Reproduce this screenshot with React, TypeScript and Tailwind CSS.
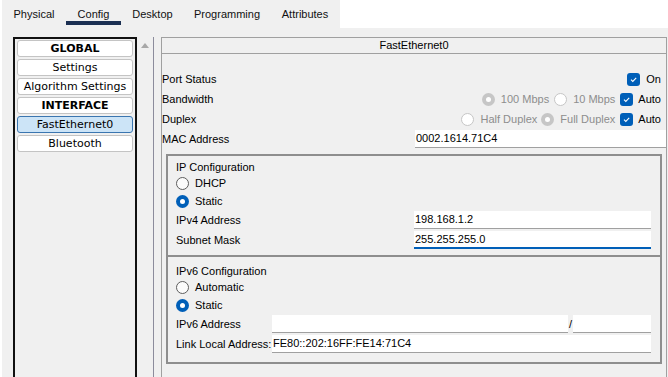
import React from "react";

function Check() {
  return (
    <span className="w-[13px] h-[13px] rounded-[3px] bg-[#005fb8] flex items-center justify-center shrink-0">
      <svg width="9" height="9" viewBox="0 0 9 9">
        <path d="M2 4.7 L3.8 6.4 L7.2 2.9" fill="none" stroke="white" strokeWidth="1.1" />
      </svg>
    </span>
  );
}

function Radio({ on, disabled }: { on?: boolean; disabled?: boolean }) {
  if (on) {
    return (
      <span
        className={
          disabled
            ? "w-[13px] h-[13px] rounded-full bg-[#c6c6c6] flex items-center justify-center shrink-0"
            : "w-[13px] h-[13px] rounded-full bg-[#005fb8] flex items-center justify-center shrink-0"
        }
      >
        <span className="block w-[5px] h-[5px] rounded-full bg-white" />
      </span>
    );
  }
  return (
    <span
      className={
        disabled
          ? "block w-[13px] h-[13px] rounded-full bg-white border border-[#c6c6c6] shrink-0"
          : "block w-[13px] h-[13px] rounded-full bg-[#fbfbfb] border border-[#5d5d5d] shrink-0"
      }
    />
  );
}

function Input({ value, w, active }: { value?: string; w: string; active?: boolean }) {
  return (
    <div
      className={
        (active
          ? "border-b-2 border-[#005fb8] "
          : "border-b border-[#a0a0a0] ") +
        "h-[18px] bg-white flex items-center pl-[1px] text-[11px] text-black " +
        w
      }
    >
      {value}
    </div>
  );
}

const tabs = [
  { t: "Physical", w: "w-[64px]" },
  { t: "Config", w: "w-[55px]", active: true },
  { t: "Desktop", w: "w-[63px]" },
  { t: "Programming", w: "w-[86px]" },
  { t: "Attributes", w: "w-[70px]" },
];

const items = [
  { t: "GLOBAL", bold: true },
  { t: "Settings" },
  { t: "Algorithm Settings" },
  { t: "INTERFACE", bold: true },
  { t: "FastEthernet0", sel: true },
  { t: "Bluetooth" },
];

export default function App() {
  return (
    <div className="w-[668px] h-[377px] bg-white overflow-hidden flex flex-col font-['Liberation_Sans',Arial,sans-serif] text-[11px] text-[#111]">
      {/* tabs */}
      <div className="h-[28px] ml-[2px] w-[338px] bg-[#f0f0f0] flex shrink-0">
        {tabs.map((t) => (
          <div key={t.t} className={"flex flex-col pt-[8px] " + t.w}>
            <div className="h-[13px] leading-[13px] text-center">{t.t}</div>
            {t.active ? <div className="h-[4px] bg-[#1b2f52]" /> : null}
          </div>
        ))}
      </div>

      {/* body */}
      <div className="flex-1 ml-[2px] bg-[#f0f0f0] flex pt-[9px] min-h-0">
        {/* left list */}
        <div className="ml-[11px] w-[124px] h-[400px] border-2 border-[#111] flex flex-col gap-[2px] pt-[1px] px-[2px] font-['DejaVu_Sans',Verdana,sans-serif] text-[11px]">
          {items.map((i) => (
            <div
              key={i.t}
              className={
                (i.sel
                  ? "bg-[#cce4f7] border-[#3b76b0] "
                  : "bg-white border-[#c4c4c4] ") +
                (i.bold ? "font-bold " : "") +
                "h-[17px] border rounded-[3px] flex items-center justify-center text-black leading-none"
              }
            >
              {i.t}
            </div>
          ))}
        </div>

        {/* scroll column */}
        <div className="w-[17px] h-[400px] border-r border-[#8c8c9c] flex justify-center pt-[6px]">
          <svg width="8" height="5" viewBox="0 0 8 5">
            <path d="M0 5 L4 0 L8 5 Z" fill="#a8a8a8" />
          </svg>
        </div>

        {/* right panel */}
        <div className="ml-[7px] w-[506px] h-[400px] border border-[#a0a0a0] flex flex-col">
          <div className="h-[16px] border-b border-[#a0a0a0] flex items-center justify-center text-black">
            FastEthernet0
          </div>

          <div className="mt-[15px] flex flex-col">
            <div className="h-[20px] flex items-center justify-between pr-[5px]">
              <span className="text-black">Port Status</span>
              <span className="flex items-center gap-[6px]">
                <Check />
                <span className="text-black">On</span>
              </span>
            </div>
            <div className="h-[20px] flex items-center justify-between pr-[5px]">
              <span className="text-black">Bandwidth</span>
              <span className="flex items-center">
                <Radio on disabled />
                <span className="ml-[6px] text-[#8d8d8d]">100 Mbps</span>
                <span className="ml-[5px] flex"><Radio disabled /></span>
                <span className="ml-[6px] text-[#8d8d8d]">10 Mbps</span>
                <span className="ml-[5px] flex"><Check /></span>
                <span className="ml-[5px] text-black">Auto</span>
              </span>
            </div>
            <div className="h-[20px] flex items-center justify-between pr-[5px]">
              <span className="text-black">Duplex</span>
              <span className="flex items-center">
                <Radio disabled />
                <span className="ml-[6px] text-[#8d8d8d]">Half Duplex</span>
                <span className="ml-[4px] flex"><Radio on disabled /></span>
                <span className="ml-[6px] text-[#8d8d8d]">Full Duplex</span>
                <span className="ml-[5px] flex"><Check /></span>
                <span className="ml-[5px] text-black">Auto</span>
              </span>
            </div>
            <div className="h-[20px] flex items-center justify-between">
              <span className="text-black">MAC Address</span>
              <Input value="0002.1614.71C4" w="w-[251px]" />
            </div>
          </div>

          {/* IP configuration */}
          <div className="mt-[5px] ml-[4px] w-[496px] border-2 border-[#8e8e8e] flex flex-col pt-[4px] pl-[8px] pr-[9px] pb-[6px]">
            <div className="h-[14px] flex items-center text-black">IP Configuration</div>
            <div className="h-[18px] flex items-center gap-[6px]">
              <Radio />
              <span className="text-black">DHCP</span>
            </div>
            <div className="h-[18px] flex items-center gap-[6px]">
              <Radio on />
              <span className="text-black">Static</span>
            </div>
            <div className="mt-[1px] h-[18px] flex items-center justify-between">
              <span className="text-black">IPv4 Address</span>
              <Input value="198.168.1.2" w="w-[237px]" />
            </div>
            <div className="mt-[2px] h-[18px] flex items-center justify-between">
              <span className="text-black">Subnet Mask</span>
              <Input value="255.255.255.0" w="w-[237px]" active />
            </div>
          </div>

          {/* IPv6 configuration */}
          <div className="ml-[4px] w-[496px] border-2 border-t-0 border-[#8e8e8e] flex flex-col pt-[7px] pl-[8px] pr-[9px] pb-[9px]">
            <div className="h-[14px] flex items-center text-black">IPv6 Configuration</div>
            <div className="h-[18px] flex items-center gap-[6px]">
              <Radio />
              <span className="text-black">Automatic</span>
            </div>
            <div className="h-[18px] flex items-center gap-[6px]">
              <Radio on />
              <span className="text-black">Static</span>
            </div>
            <div className="mt-[1px] h-[18px] flex items-center">
              <span className="w-[96px] text-black">IPv6 Address</span>
              <Input w="w-[296px]" />
              <span className="w-[5px] text-center text-black">/</span>
              <Input w="w-[78px]" />
            </div>
            <div className="mt-[2px] h-[18px] flex items-center">
              <span className="w-[96px] text-black whitespace-nowrap">Link Local Address:</span>
              <Input value="FE80::202:16FF:FE14:71C4" w="w-[379px]" />
            </div>
          </div>
        </div>
      </div>
    </div>
  );
}
